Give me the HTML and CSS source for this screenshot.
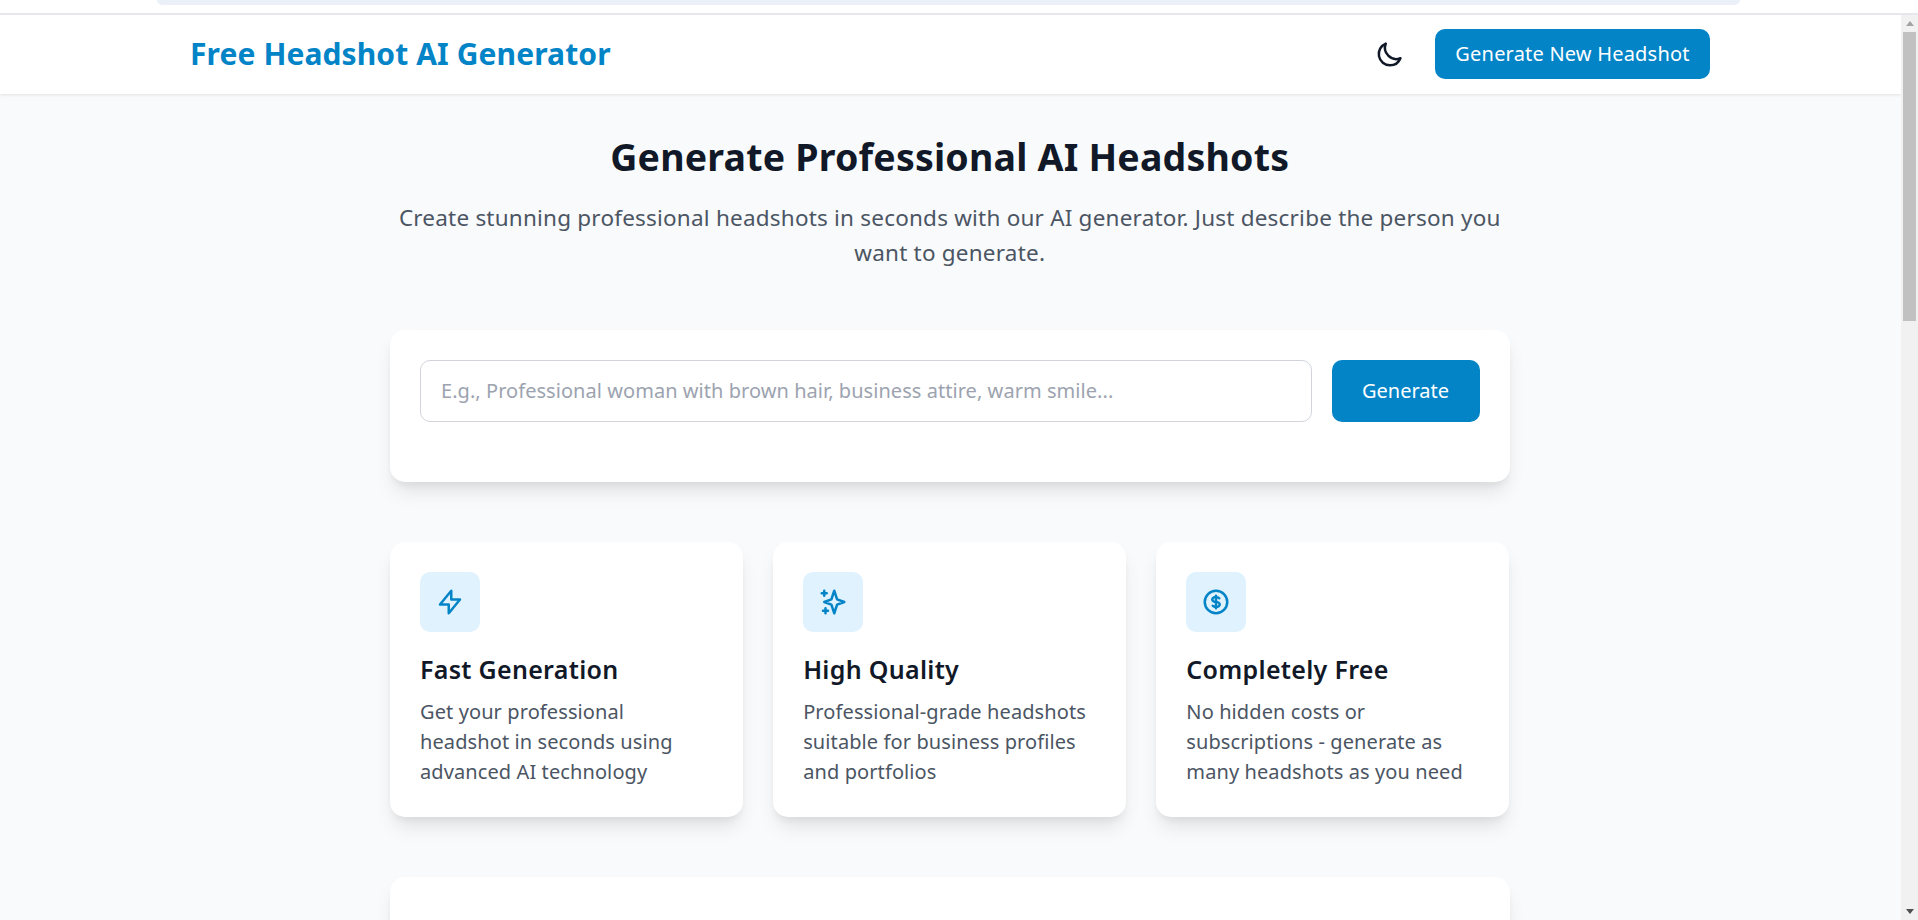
FILE: index.html
```html
<!DOCTYPE html>
<html lang="en">
<head>
    <meta charset="UTF-8">
    <meta name="viewport" content="width=device-width, initial-scale=1.0">
    <title>Free Headshot AI Generator</title>
    <link rel="stylesheet" href="styles.css">
</head>
<body>
    <div class="top-strip">
        <div class="top-bar"></div>
    </div>
    <div class="window">
        <div class="page">
            <header class="site-header">
                <a class="logo" href="#">Free Headshot AI Generator</a>
                <div class="header-actions">
                    <button class="theme-toggle" aria-label="Toggle theme">
                        <svg class="icon" viewBox="0 0 24 24"><path d="M20.354 15.354A9 9 0 018.646 3.646 9.003 9.003 0 0012 21a9.003 9.003 0 008.354-5.646z"/></svg>
                    </button>
                    <button class="new-btn">Generate New Headshot</button>
                </div>
            </header>
            <main class="content">
                <h1>Generate Professional AI Headshots</h1>
                <p class="subtitle">Create stunning professional headshots in seconds with our AI generator. Just describe the person you want to generate.</p>

                <section class="card search-card">
                    <div class="search-row">
                        <input class="prompt" type="text" placeholder="E.g., Professional woman with brown hair, business attire, warm smile...">
                        <button class="generate-btn">Generate</button>
                    </div>
                </section>

                <section class="features">
                    <div class="card feature">
                        <div class="feature-icon">
                            <svg class="icon" viewBox="0 0 24 24"><path d="M13 10V3L4 14h7v7l9-11h-7z"/></svg>
                        </div>
                        <h3>Fast Generation</h3>
                        <p>Get your professional headshot in seconds using advanced AI technology</p>
                    </div>
                    <div class="card feature">
                        <div class="feature-icon">
                            <svg class="icon" viewBox="0 0 24 24"><path d="M5 3v4M3 5h4M6 17v4m-2-2h4m5-16l2.286 6.857L21 12l-5.714 2.143L13 21l-2.286-6.857L5 12l5.714-2.143L13 3z"/></svg>
                        </div>
                        <h3>High Quality</h3>
                        <p>Professional-grade headshots suitable for business profiles and portfolios</p>
                    </div>
                    <div class="card feature">
                        <div class="feature-icon">
                            <svg class="icon" viewBox="0 0 24 24"><path d="M12 8c-1.657 0-3 .895-3 2s1.343 2 3 2 3 .895 3 2-1.343 2-3 2m0-8c1.11 0 2.08.402 2.599 1M12 8V7m0 1v8m0 0v1m0-1c-1.11 0-2.08-.402-2.599-1M21 12a9 9 0 11-18 0 9 9 0 0118 0z"/></svg>
                        </div>
                        <h3>Completely Free</h3>
                        <p>No hidden costs or subscriptions - generate as many headshots as you need</p>
                    </div>
                </section>

                <section class="card next-card"></section>
            </main>
        </div>
        <div class="scrollbar">
            <div class="arrow-box"><span class="arrow-up"></span></div>
            <div class="track"><div class="thumb"></div></div>
            <div class="arrow-box"><span class="arrow-down"></span></div>
        </div>
    </div>
</body>
</html>
```

FILE: styles.css
```css
* {
    box-sizing: border-box;
}
html, body {
    height: 100%;
}
body {
    font-family: "Noto Sans", "Open Sans", Arial, sans-serif;
    margin: 0;
    height: 920px;
    overflow: hidden;
    display: flex;
    flex-direction: column;
    background: #fff;
    color: #111827;
}
.top-strip {
    height: 15px;
    flex: none;
    padding: 0 178px 0 157px;
    border-bottom: 2px solid #e5e7eb;
    background: #fff;
}
.top-bar {
    height: 5px;
    background: #ebf0f9;
    border-radius: 0 0 14px 14px;
}
.window {
    flex: 1;
    display: flex;
    min-height: 0;
}
.page {
    flex: 1;
    min-width: 0;
    background: #f9fafb;
    overflow: hidden;
}
.site-header {
    height: 79px;
    padding: 0 191px 1px 190px;
    display: flex;
    align-items: center;
    justify-content: space-between;
    background: #fff;
    box-shadow: 0 1px 3px rgba(0, 0, 0, 0.1);
    position: relative;
}
.logo {
    margin-bottom: 2px;
    font-size: 30px;
    font-weight: 700;
    letter-spacing: 0.1px;
    color: #0284c7;
    text-decoration: none;
}
.header-actions {
    display: flex;
    align-items: center;
    gap: 30px;
}
.icon {
    width: 30px;
    height: 30px;
    display: block;
    fill: none;
    stroke: currentColor;
    stroke-width: 2;
    stroke-linecap: round;
    stroke-linejoin: round;
}
.theme-toggle {
    padding: 0;
    width: 30px;
    height: 30px;
    border: none;
    background: none;
    color: #111827;
    cursor: pointer;
}
button {
    font-family: inherit;
}
.new-btn {
    width: 275px;
    height: 50px;
    padding: 0 0 2px;
    border: none;
    border-radius: 10px;
    background: #0284c7;
    color: #fff;
    font-size: 20px;
    letter-spacing: 0.2px;
    cursor: pointer;
}
.content {
    width: 1119.5px;
    margin-left: 390px;
    padding-top: 40px;
}
h1 {
    margin: 0 0 21px;
    font-size: 37.5px;
    line-height: 45px;
    font-weight: 700;
    letter-spacing: 0.2px;
    text-align: center;
    color: #111827;
}
.subtitle {
    margin: 0 0 60px;
    font-size: 22.5px;
    line-height: 35px;
    letter-spacing: 0.21px;
    text-align: center;
    color: #4b5563;
}
.card {
    background: #fff;
    border-radius: 15px;
    box-shadow: 0 12.5px 19px -4px rgba(0, 0, 0, 0.1), 0 5px 7.5px -2.5px rgba(0, 0, 0, 0.05);
}
.search-card {
    height: 152px;
    padding: 30px;
    margin-bottom: 60px;
}
.search-row {
    display: flex;
    gap: 20px;
}
.prompt {
    flex: 1;
    min-width: 0;
    height: 62px;
    padding: 0 20px 2px;
    border: 1px solid #d1d5db;
    border-radius: 10px;
    font-family: inherit;
    font-size: 20px;
    letter-spacing: 0.05px;
    background: #fff;
    outline: none;
}
.prompt::placeholder {
    color: #9ca3af;
}
.generate-btn {
    width: 148px;
    height: 62px;
    padding: 0 0 2px;
    border: none;
    border-radius: 10px;
    background: #0284c7;
    color: #fff;
    font-size: 20px;
    cursor: pointer;
}
.features {
    display: grid;
    grid-template-columns: repeat(3, 1fr);
    gap: 30px;
    margin-bottom: 60px;
}
.feature {
    height: 275px;
    padding: 30px;
}
.feature-icon {
    width: 60px;
    height: 60px;
    margin-bottom: 20px;
    display: flex;
    align-items: center;
    justify-content: center;
    border-radius: 10px;
    background: #e0f2fe;
    color: #0284c7;
}
.feature h3 {
    margin: 0 0 10px;
    font-size: 25px;
    line-height: 35px;
    font-weight: 600;
    letter-spacing: 0.3px;
    color: #111827;
}
.feature p {
    margin: 0;
    font-size: 20px;
    line-height: 30px;
    letter-spacing: 0.1px;
    color: #4b5563;
}
.next-card {
    height: 400px;
}
.scrollbar {
    width: 17px;
    flex: none;
    display: flex;
    flex-direction: column;
    background: #f1f1f1;
}
.arrow-box {
    height: 17px;
    flex: none;
    display: flex;
    align-items: center;
    justify-content: center;
}
.arrow-up {
    border: 4px solid transparent;
    border-top: 0;
    border-bottom: 5px solid #a3a3a3;
}
.arrow-down {
    border: 4px solid transparent;
    border-bottom: 0;
    border-top: 5px solid #505050;
}
.track {
    flex: 1;
    padding: 0 2px;
}
.thumb {
    height: 289px;
    background: #c1c1c1;
}
```
